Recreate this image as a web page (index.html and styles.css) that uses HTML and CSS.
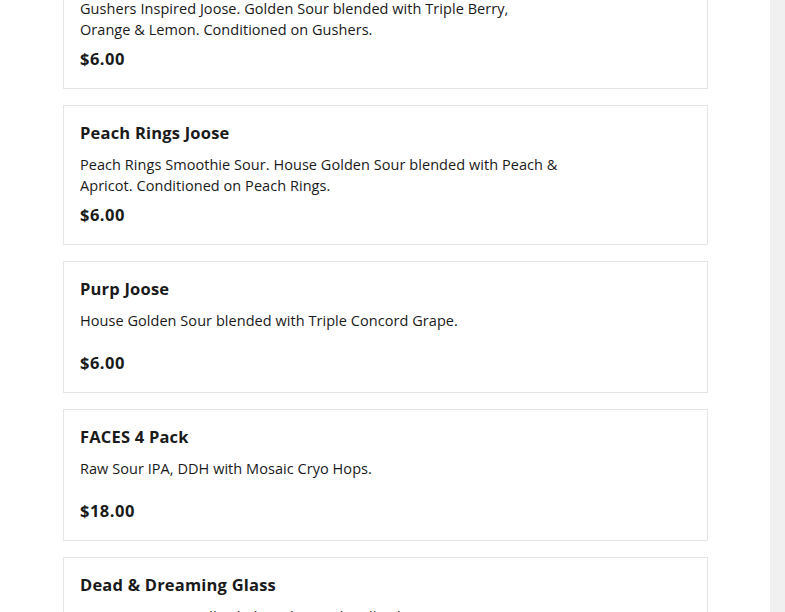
FILE: index.html
```html
<!DOCTYPE html>
<html lang="en">
<head>
<meta charset="utf-8">
<title>Menu</title>
<link rel="stylesheet" href="styles.css">
</head>
<body>
<div class="page">
  <main class="content">
    <ul class="menu-list">
      <li class="item">
        <h3 class="item-name">Gushers Joose</h3>
        <p class="item-desc">Gushers Inspired Joose. Golden Sour blended with Triple Berry,<br>Orange &amp; Lemon. Conditioned on Gushers.</p>
        <div class="item-price">$6.00</div>
      </li>
      <li class="item">
        <h3 class="item-name">Peach Rings Joose</h3>
        <p class="item-desc">Peach Rings Smoothie Sour. House Golden Sour blended with Peach &amp;<br>Apricot. Conditioned on Peach Rings.</p>
        <div class="item-price">$6.00</div>
      </li>
      <li class="item">
        <h3 class="item-name">Purp Joose</h3>
        <p class="item-desc">House Golden Sour blended with Triple Concord Grape.</p>
        <div class="item-price">$6.00</div>
      </li>
      <li class="item">
        <h3 class="item-name">FACES 4 Pack</h3>
        <p class="item-desc">Raw Sour IPA, DDH with Mosaic Cryo Hops.</p>
        <div class="item-price">$18.00</div>
      </li>
      <li class="item">
        <h3 class="item-name">Dead &amp; Dreaming Glass</h3>
        <p class="item-desc">16 oz Custom Handle Shaker Glass with Full-color Print.</p>
        <div class="item-price">$10.00</div>
      </li>
    </ul>
  </main>
  <aside class="rail"></aside>
</div>
</body>
</html>
```
FILE: styles.css
```css
html, body {
  margin: 0;
  padding: 0;
  background: #ffffff;
  overflow: hidden;
}
body {
  font-family: "Open Sans", "Liberation Sans", sans-serif;
  color: #1a1a1a;
}
.page {
  display: flex;
  width: 785px;
  height: 612px;
  overflow: hidden;
}
.content {
  width: 770px;
  flex: none;
}
.rail {
  flex: 1;
  background: #f0f0f0;
}
.menu-list {
  list-style: none;
  margin: -51px 0 0 63px;
  padding: 0;
  width: 645px;
  display: flex;
  flex-direction: column;
  gap: 16px;
}
.item {
  border: 1px solid #e5e5e5;
  padding: 16px 16px 18px;
  display: flex;
  flex-direction: column;
}
.item-name {
  margin: 0;
  font-size: 16.5px;
  line-height: 22px;
  font-weight: 700;
  letter-spacing: 0.2px;
}
.item-desc {
  margin: 10px 0 0;
  font-size: 14.5px;
  line-height: 21px;
  min-height: 34px;
  letter-spacing: 0.05px;
}
.item-price {
  margin-top: 8px;
  font-size: 16.5px;
  line-height: 22px;
  font-weight: 700;
  letter-spacing: 0.5px;
}
```
